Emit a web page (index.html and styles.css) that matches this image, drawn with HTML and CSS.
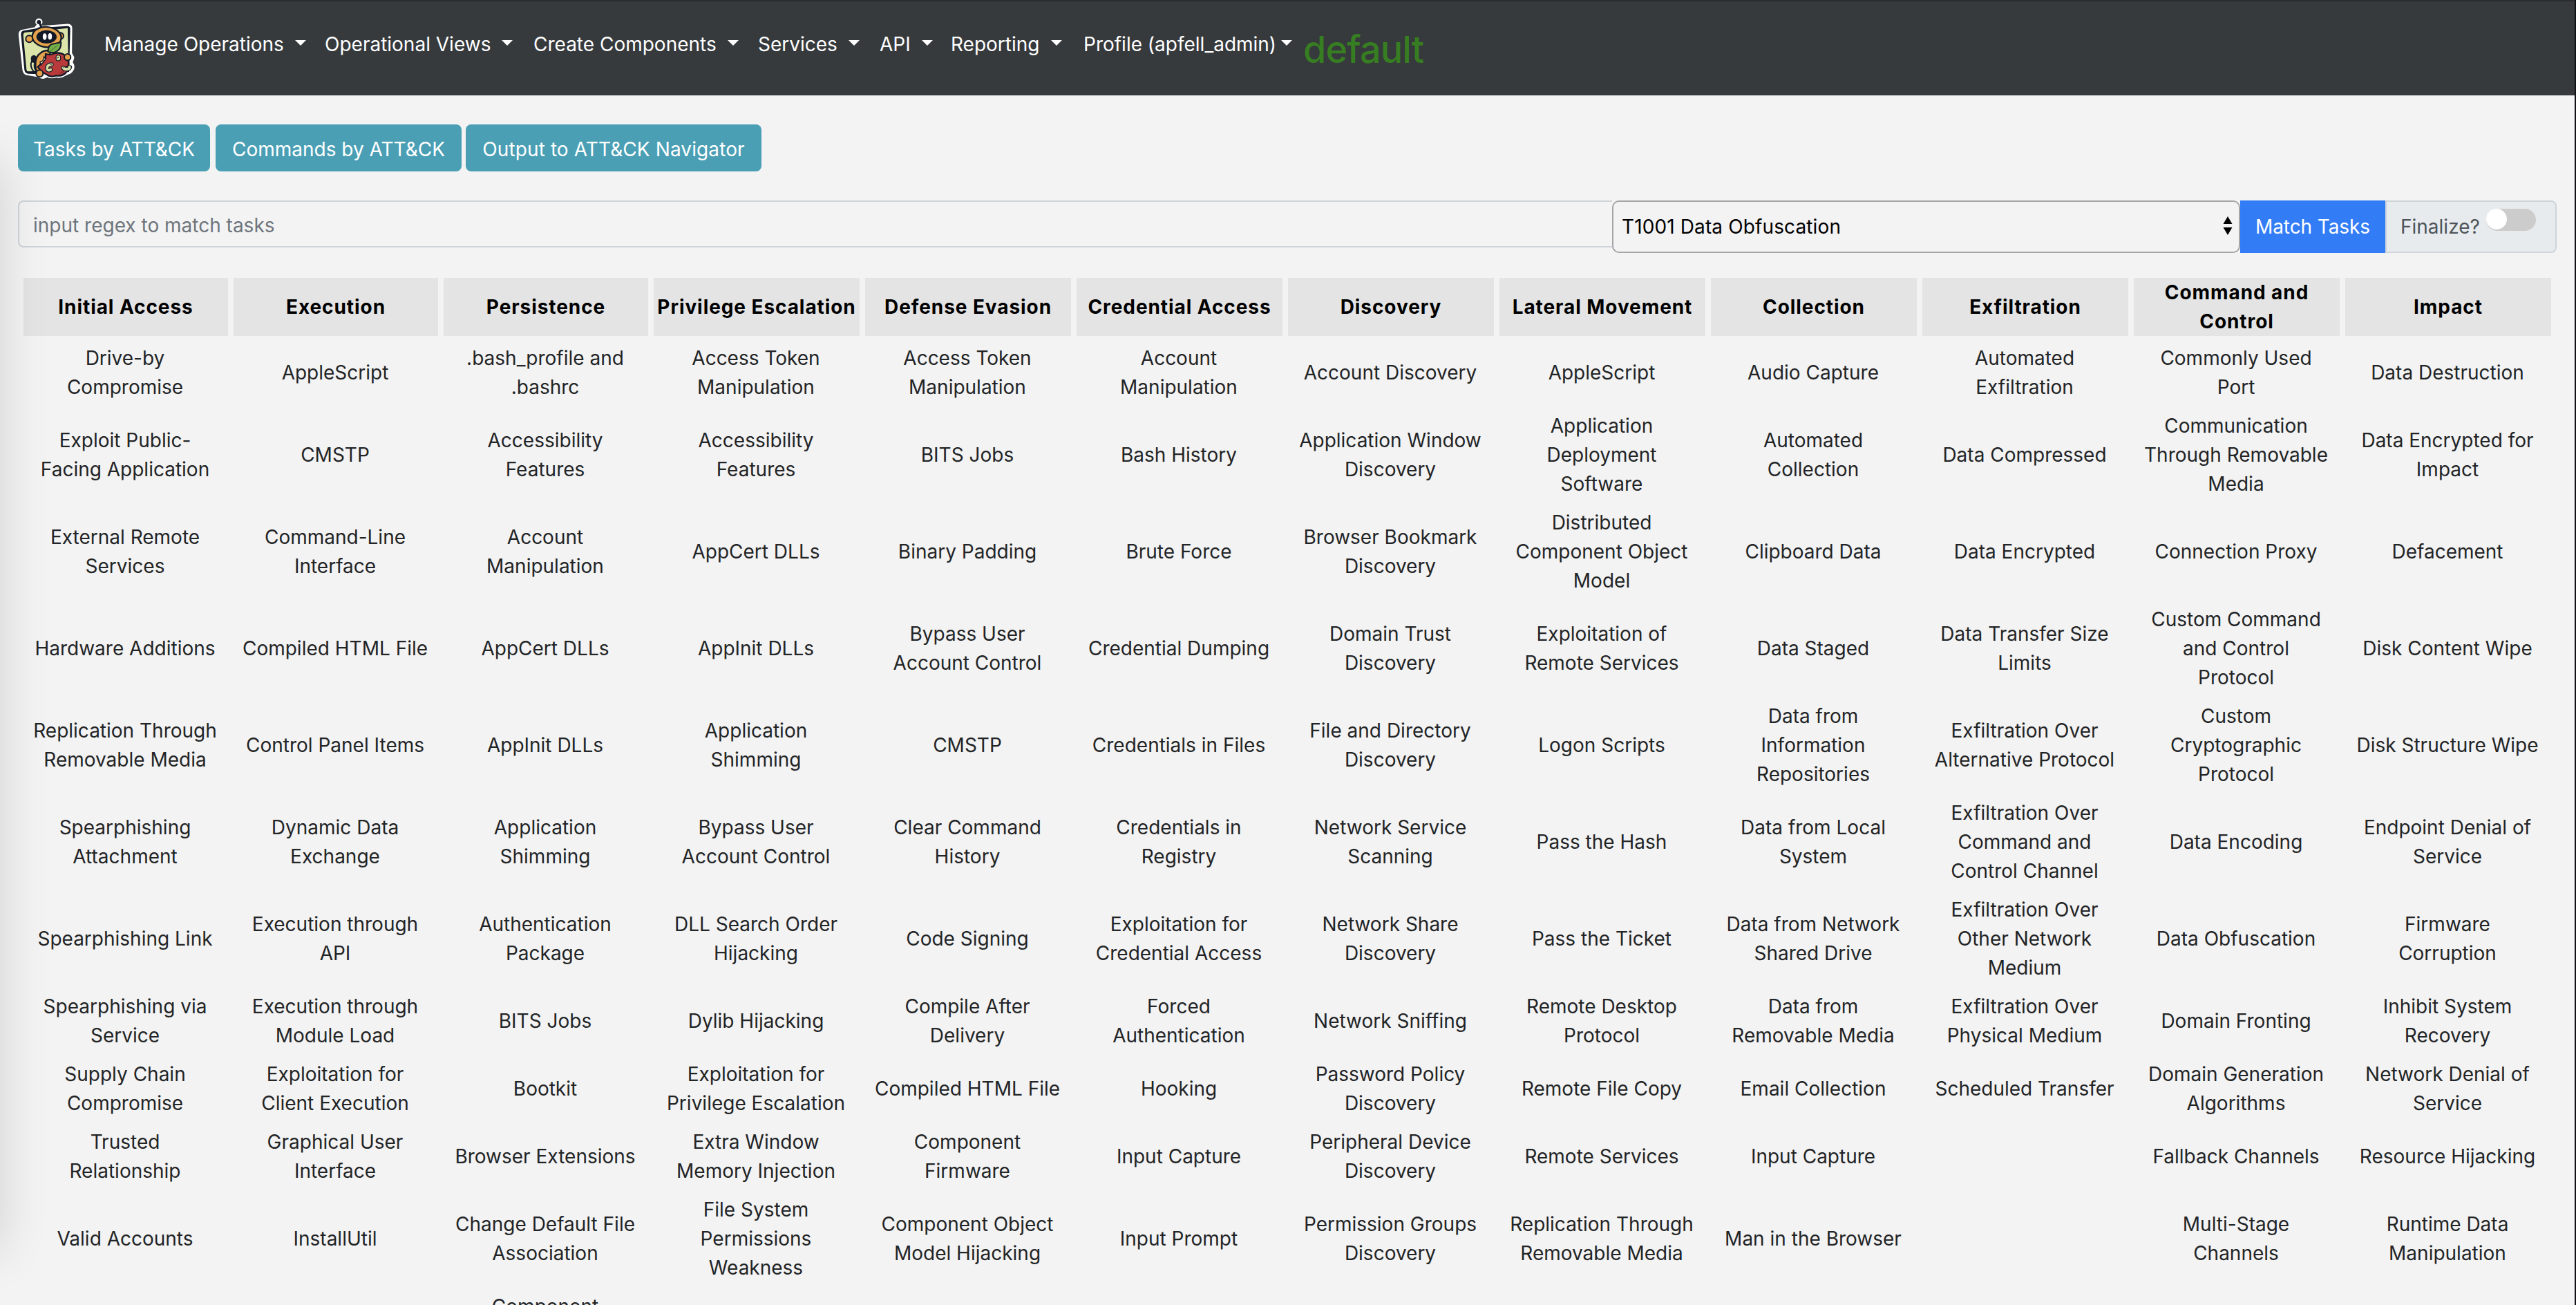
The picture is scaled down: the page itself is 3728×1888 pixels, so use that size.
FILE: index.html
```
<!DOCTYPE html>
<html lang="en">
<head>
<meta charset="utf-8">
<title>ATT&amp;CK Matrix</title>
<link rel="stylesheet" href="styles.css">
</head>
<body>
<nav class="navbar">
  <svg class="logo" viewBox="0 0 288 306" aria-hidden="true">
    <!-- white sticker outline -->
    <g stroke="#fff" stroke-width="13" stroke-linejoin="round" fill="#fff">
      <path d="M34 76 L94 64 L110 44 L120 58 L236 50 Q247 52 247 62 L246 172 L256 190 L249 212 Q263 230 252 244 Q246 254 236 256 L224 262 Q204 276 184 270 Q162 278 146 268 Q126 282 106 268 L58 260 Q46 257 44 244 L27 92 Q26 80 34 76 Z"/>
      <circle cx="109" cy="35" r="9"/>
    </g>
    <path d="M44 73 Q30 75 31 90 L46 244 Q48 258 62 260 L110 262 L240 252 L245 64 Q244 52 230 53 L118 60 Z" fill="#141a28"/>
    <path d="M48 81 L234 62 L236 180 L225 245 L63 250 Q56 250 55 242 L41 92 Q41 83 48 81 Z" fill="#dbe5aa"/>
    <!-- antenna -->
    <circle cx="109" cy="36" r="9" fill="#141a28"/>
    <path d="M111 40 L122 62" stroke="#141a28" stroke-width="9"/>
    <!-- body and arm -->
    <path d="M100 262 L94 226 Q92 184 116 170 Q132 156 158 160 L150 240 Z" fill="#e5a24c" stroke="#141a28" stroke-width="7"/>
    <ellipse cx="87" cy="196" rx="13" ry="17" fill="#141a28"/>
    <path d="M79 202 Q66 228 88 252 L102 260 M92 208 Q84 232 97 248" fill="none" stroke="#141a28" stroke-width="6"/>
    <!-- head -->
    <circle cx="202" cy="96" r="14" fill="#d8913f" stroke="#141a28" stroke-width="6"/>
    <ellipse cx="143" cy="101" rx="63" ry="44" fill="#e5a24c" stroke="#141a28" stroke-width="7" transform="rotate(5 143 101)"/>
    <circle cx="67" cy="109" r="15" fill="#e5a24c" stroke="#141a28" stroke-width="6"/>
    <ellipse cx="142" cy="100" rx="44" ry="29" fill="#111827"/>
    <ellipse cx="134" cy="99" rx="8.500" ry="14" fill="#fff"/>
    <ellipse cx="157" cy="98" rx="8.500" ry="14" fill="#fff"/>
    <!-- apple -->
    <path d="M138 174 Q156 180 170 174 Q192 164 216 176 Q238 190 238 216 Q238 244 224 258 Q206 272 184 268 Q160 278 144 264 L120 252 L104 230 L115 220 L126 221 L130 207 L142 203 L138 190 Z" fill="#b93a3a" stroke="#141a28" stroke-width="7" stroke-linejoin="round"/>
    <path d="M148 176 L150 206 L138 212 L134 224 L118 226 L138 200 Z" fill="#b93a3a"/>
    <path d="M131 186 L138 196 L126 212 L116 220 L114 208 L126 204 Z" fill="#eed5ac" stroke="#141a28" stroke-width="4"/>
    <path d="M192 262 Q236 254 234 216 L224 240 Z" fill="#8f2d30"/>
    <!-- leaf -->
    <path d="M148 164 Q148 132 174 130 L205 124 Q206 152 188 162 Q172 174 148 164 Z" fill="#75ad48" stroke="#141a28" stroke-width="6" stroke-linejoin="round"/>
    <path d="M148 170 Q168 154 188 138" fill="none" stroke="#3e7035" stroke-width="3"/>
    <!-- worms -->
    <g fill="none" stroke-linecap="round">
      <path d="M164 220 Q142 222 145 238 Q148 250 160 242" stroke="#141a28" stroke-width="18"/>
      <path d="M164 220 Q142 222 145 238 Q148 250 160 242" stroke="#d5dfa4" stroke-width="11"/>
      <path d="M214 235 Q224 242 232 236 Q240 242 243 232" stroke="#141a28" stroke-width="19"/>
      <path d="M214 235 Q224 242 232 240 Q243 238 242 230" stroke="#d5dfa4" stroke-width="12"/>
      <path d="M193 189 L193 194" stroke="#141a28" stroke-width="23"/>
      <path d="M193 189 L193 194" stroke="#d5dfa4" stroke-width="16"/>
      <path d="M188 192 L194 189 M160 220 L164 222 M213 235 L216 232" stroke="#141a28" stroke-width="3"/>
    </g>
    <!-- hands -->
    <circle cx="233" cy="188" r="14" fill="#e5a24c" stroke="#141a28" stroke-width="6"/>
    <circle cx="112" cy="259" r="15" fill="#e5a24c" stroke="#141a28" stroke-width="6"/>
  </svg>
  <ul class="menu">
    <li class="item operations">Manage Operations<i class="caret"></i></li>
    <li class="item views">Operational Views<i class="caret"></i></li>
    <li class="item components">Create Components<i class="caret"></i></li>
    <li class="item services">Services<i class="caret"></i></li>
    <li class="item api">API<i class="caret"></i></li>
    <li class="item reporting">Reporting<i class="caret"></i></li>
    <li class="item profile">Profile (apfell_admin)<i class="caret"></i></li>
  </ul>
  <span class="operation">default</span>
</nav>
<main class="content">
  <div class="actions">
    <button class="btn tasks">Tasks by ATT&amp;CK</button>
    <button class="btn commands">Commands by ATT&amp;CK</button>
    <button class="btn output">Output to ATT&amp;CK Navigator</button>
  </div>
  <div class="filter">
    <div class="regex">input regex to match tasks</div>
    <div class="technique"><span>T1001 Data Obfuscation</span>
      <svg class="updown" viewBox="0 0 14 27" aria-hidden="true"><path d="M7 0 L13.500 11 H.5 Z M.5 16 H13.500 L7 27 Z"/></svg>
    </div>
    <div class="match">Match Tasks</div>
    <div class="finalize"><span>Finalize?</span><span class="toggle"><span class="knob"></span></span></div>
  </div>
  <table class="matrix">
    <colgroup><col class="narrow" span="3"><col class="wide" span="9"></colgroup>
    <thead>
    <tr><th>Initial Access</th><th>Execution</th><th>Persistence</th><th>Privilege Escalation</th><th>Defense Evasion</th><th>Credential Access</th><th>Discovery</th><th>Lateral Movement</th><th>Collection</th><th>Exfiltration</th><th>Command and<br>Control</th><th>Impact</th></tr>
    </thead>
    <tbody>
    <tr><td>Drive-by<br>Compromise</td><td>AppleScript</td><td>.bash_profile and<br>.bashrc</td><td>Access Token<br>Manipulation</td><td>Access Token<br>Manipulation</td><td>Account<br>Manipulation</td><td>Account Discovery</td><td>AppleScript</td><td>Audio Capture</td><td>Automated<br>Exfiltration</td><td>Commonly Used<br>Port</td><td>Data Destruction</td></tr>
    <tr><td>Exploit Public-<br>Facing Application</td><td>CMSTP</td><td>Accessibility<br>Features</td><td>Accessibility<br>Features</td><td>BITS Jobs</td><td>Bash History</td><td>Application Window<br>Discovery</td><td>Application<br>Deployment<br>Software</td><td>Automated<br>Collection</td><td>Data Compressed</td><td>Communication<br>Through Removable<br>Media</td><td>Data Encrypted for<br>Impact</td></tr>
    <tr><td>External Remote<br>Services</td><td>Command-Line<br>Interface</td><td>Account<br>Manipulation</td><td>AppCert DLLs</td><td>Binary Padding</td><td>Brute Force</td><td>Browser Bookmark<br>Discovery</td><td>Distributed<br>Component Object<br>Model</td><td>Clipboard Data</td><td>Data Encrypted</td><td>Connection Proxy</td><td>Defacement</td></tr>
    <tr><td>Hardware Additions</td><td>Compiled HTML File</td><td>AppCert DLLs</td><td>AppInit DLLs</td><td>Bypass User<br>Account Control</td><td>Credential Dumping</td><td>Domain Trust<br>Discovery</td><td>Exploitation of<br>Remote Services</td><td>Data Staged</td><td>Data Transfer Size<br>Limits</td><td>Custom Command<br>and Control<br>Protocol</td><td>Disk Content Wipe</td></tr>
    <tr><td>Replication Through<br>Removable Media</td><td>Control Panel Items</td><td>AppInit DLLs</td><td>Application<br>Shimming</td><td>CMSTP</td><td>Credentials in Files</td><td>File and Directory<br>Discovery</td><td>Logon Scripts</td><td>Data from<br>Information<br>Repositories</td><td>Exfiltration Over<br>Alternative Protocol</td><td>Custom<br>Cryptographic<br>Protocol</td><td>Disk Structure Wipe</td></tr>
    <tr><td>Spearphishing<br>Attachment</td><td>Dynamic Data<br>Exchange</td><td>Application<br>Shimming</td><td>Bypass User<br>Account Control</td><td>Clear Command<br>History</td><td>Credentials in<br>Registry</td><td>Network Service<br>Scanning</td><td>Pass the Hash</td><td>Data from Local<br>System</td><td>Exfiltration Over<br>Command and<br>Control Channel</td><td>Data Encoding</td><td>Endpoint Denial of<br>Service</td></tr>
    <tr><td>Spearphishing Link</td><td>Execution through<br>API</td><td>Authentication<br>Package</td><td>DLL Search Order<br>Hijacking</td><td>Code Signing</td><td>Exploitation for<br>Credential Access</td><td>Network Share<br>Discovery</td><td>Pass the Ticket</td><td>Data from Network<br>Shared Drive</td><td>Exfiltration Over<br>Other Network<br>Medium</td><td>Data Obfuscation</td><td>Firmware<br>Corruption</td></tr>
    <tr><td>Spearphishing via<br>Service</td><td>Execution through<br>Module Load</td><td>BITS Jobs</td><td>Dylib Hijacking</td><td>Compile After<br>Delivery</td><td>Forced<br>Authentication</td><td>Network Sniffing</td><td>Remote Desktop<br>Protocol</td><td>Data from<br>Removable Media</td><td>Exfiltration Over<br>Physical Medium</td><td>Domain Fronting</td><td>Inhibit System<br>Recovery</td></tr>
    <tr><td>Supply Chain<br>Compromise</td><td>Exploitation for<br>Client Execution</td><td>Bootkit</td><td>Exploitation for<br>Privilege Escalation</td><td>Compiled HTML File</td><td>Hooking</td><td>Password Policy<br>Discovery</td><td>Remote File Copy</td><td>Email Collection</td><td>Scheduled Transfer</td><td>Domain Generation<br>Algorithms</td><td>Network Denial of<br>Service</td></tr>
    <tr><td>Trusted<br>Relationship</td><td>Graphical User<br>Interface</td><td>Browser Extensions</td><td>Extra Window<br>Memory Injection</td><td>Component<br>Firmware</td><td>Input Capture</td><td>Peripheral Device<br>Discovery</td><td>Remote Services</td><td>Input Capture</td><td></td><td>Fallback Channels</td><td>Resource Hijacking</td></tr>
    <tr><td>Valid Accounts</td><td>InstallUtil</td><td>Change Default File<br>Association</td><td>File System<br>Permissions<br>Weakness</td><td>Component Object<br>Model Hijacking</td><td>Input Prompt</td><td>Permission Groups<br>Discovery</td><td>Replication Through<br>Removable Media</td><td>Man in the Browser</td><td></td><td>Multi-Stage<br>Channels</td><td>Runtime Data<br>Manipulation</td></tr>
    <tr><td></td><td></td><td>Component</td><td></td><td></td><td></td><td></td><td></td><td></td><td></td><td></td><td></td></tr>
    </tbody>
  </table>
</main>
<div class="drawer"></div>
<div class="edge"></div>
</body>
</html>
```
FILE: styles.css
```
* { box-sizing: border-box; }
html, body { height: 100%; overflow: hidden; }
body {
  margin: 0;
  background: #f3f3f3;
  color: #222426;
  font: 400 28px/42px Inter, "Noto Sans", sans-serif;
}
.navbar {
  display: flex;
  align-items: flex-start;
  height: 138px;
  padding: 18px 0 0 20px;
  background: #363a3d;
  border-top: 2px solid #292b2c;
}
.logo { flex: none; width: 96px; height: 102px; }
.menu {
  display: flex;
  margin: 0;
  padding: 23px 0 0 35px;
  list-style: none;
  color: #fff;
  white-space: nowrap;
}
.item { display: flex; align-items: flex-start; flex: none; }
.item .caret { margin-left: 16px; }
.caret {
  margin-top: 15px;
  border: 8px solid transparent;
  border-top-color: #fff;
  border-bottom: 0;
}
.operations { width: 319px; }
.views { width: 302px; }
.components { width: 325px; }
.services { width: 176px; }
.api { width: 103px; }
.reporting { width: 192px; }
.profile { width: 318px; }
.profile .caret { margin-left: 7px; }
.operation {
  padding-top: 19px;
  color: #377e22;
  font-size: 54px;
  font-weight: 450;
  line-height: 66px;
  letter-spacing: -.9px;
}
.content { padding: 42px 28px 0 26px; }
.actions { display: flex; gap: 6px; }
.btn {
  height: 68px;
  padding: 15px 0 11px;
  border: 0;
  border-radius: 8px;
  background: #4a9fb5;
  color: #fff;
  font: inherit;
  white-space: nowrap;
}
.tasks { width: 278px; }
.commands { width: 356px; margin-left: 2px; }
.output { width: 428px; letter-spacing: .1px; }
.filter { display: flex; align-items: flex-start; height: 76px; margin-top: 42px; white-space: nowrap; }
.regex {
  width: 2307px;
  height: 68px;
  padding: 13px 20px;
  border: 2px solid #ced4d9;
  border-right: 0;
  border-radius: 8px 0 0 8px;
  color: #6e757c;
}
.technique {
  display: flex;
  justify-content: space-between;
  width: 909px;
  height: 76px;
  padding: 15px 9px 0 12px;
  border: 2px solid #a6a6a6;
  border-radius: 10px;
  color: #000;
  letter-spacing: .12px;
}
.updown { width: 14px; height: 27px; margin-top: 6px; }
.match { width: 210px; height: 76px; padding-top: 17px; background: #327cf6; color: #fff; text-align: center; letter-spacing: -.1px; }
.finalize {
  display: flex;
  justify-content: space-between;
  flex: 1;
  height: 76px;
  padding: 15px 28px 0 20px;
  border: 2px solid #ced4d9;
  border-radius: 0 8px 8px 0;
  background: #e8ebee;
  color: #4d5358;
}
.toggle { width: 72px; height: 32px; margin-top: -5px; border-radius: 16px; background: #ccc; }
.knob { display: block; width: 30px; height: 30px; border-radius: 50%; background: #fff; }
.matrix {
  table-layout: fixed;
  width: 3674px;
  margin-top: 28px;
  border-spacing: 8px;
  border-collapse: separate;
  text-align: center;
  white-space: nowrap;
}
.narrow { width: 296px; }
.wide { width: 298px; }
.matrix th { padding: 0; background: #e4e4e4; color: #000; font-weight: 700; letter-spacing: .92px; }
.matrix td { padding: 3px 2px 3px 0; }
/* collapsed side drawer: only its shadow reaches the page */
.drawer {
  position: fixed;
  top: 235px;
  left: -500px;
  width: 500px;
  height: 1575px;
  box-shadow: 0 0 68px rgba(0, 0, 0, .14);
  pointer-events: none;
}
.edge { position: fixed; top: 0; right: 0; bottom: 0; width: 2px; background: #101215; }
```
